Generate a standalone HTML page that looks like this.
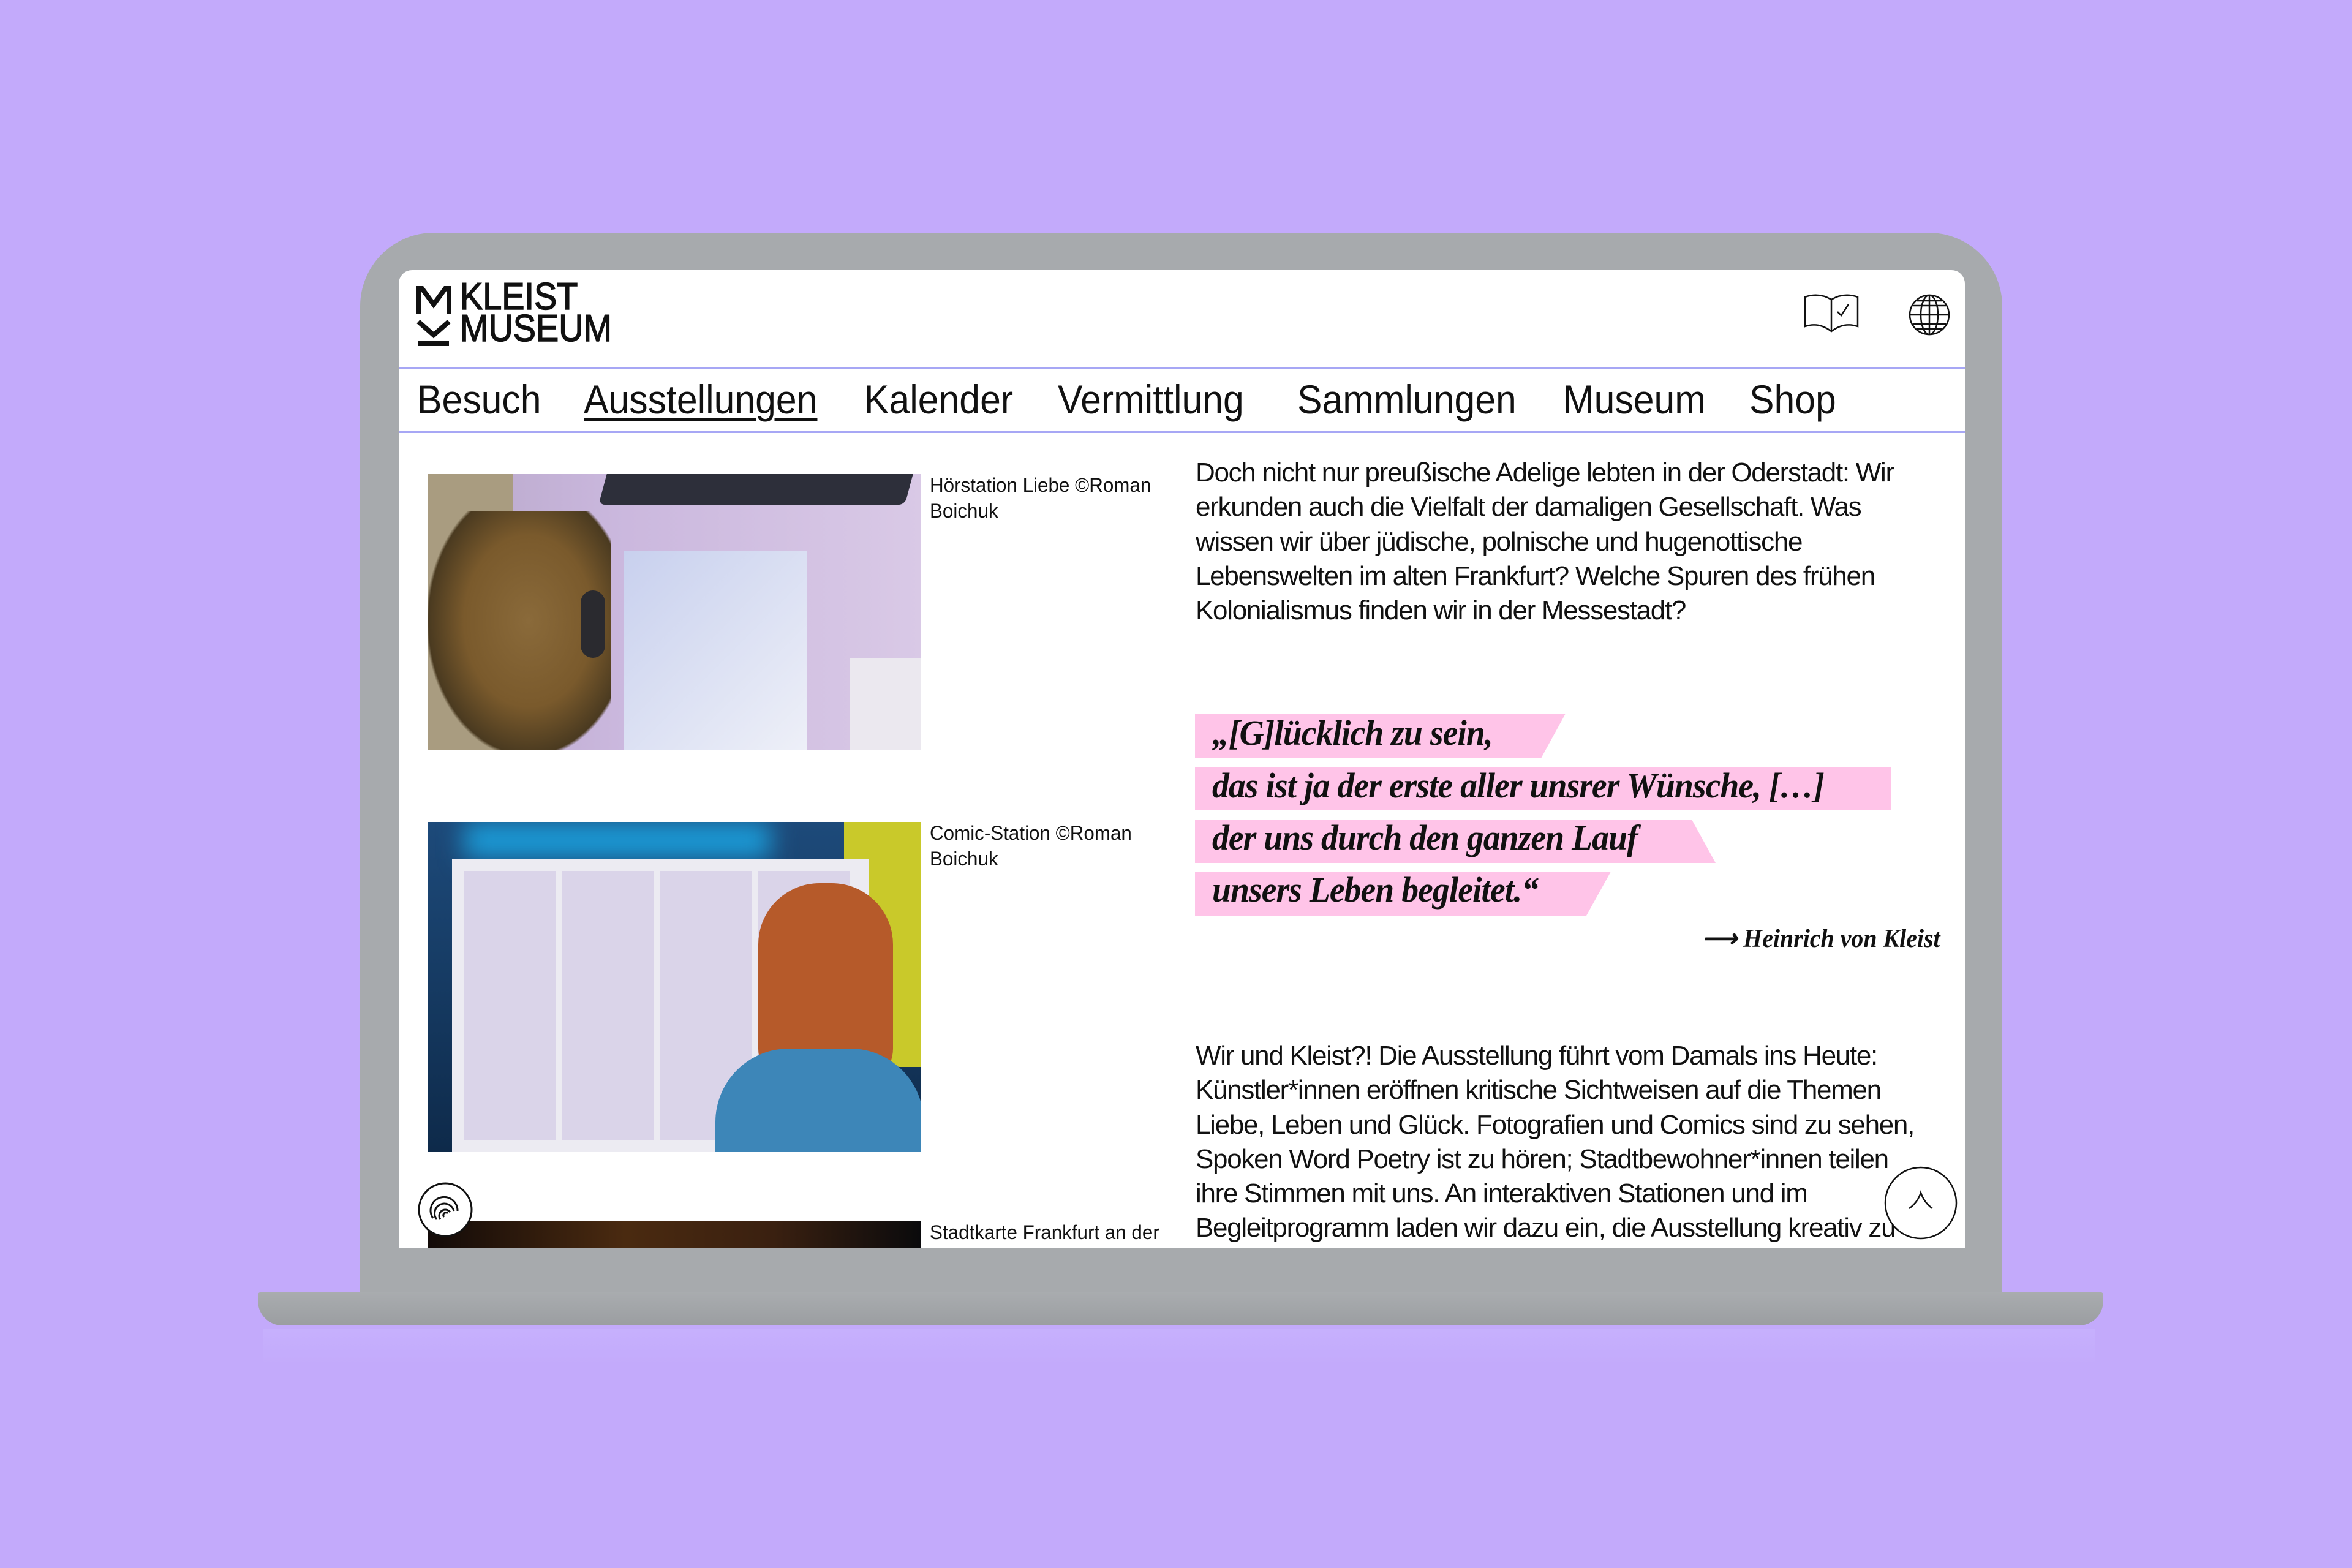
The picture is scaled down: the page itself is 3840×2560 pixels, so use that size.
<!DOCTYPE html>
<html><head><meta charset="utf-8"><style>
*{margin:0;padding:0;box-sizing:border-box}
body{width:3840px;height:2560px;background:#c3aafb;position:relative;overflow:hidden;font-family:"Liberation Sans",sans-serif;color:#111}
.abs{position:absolute}
.lid{left:588px;top:380px;width:2681px;height:1760px;background:#a7aaad;border-radius:120px 120px 0 0}
.base{left:421px;top:2110px;width:3013px;height:54px;background:linear-gradient(#a9acaf,#9b9ea1);border-radius:4px 4px 40px 40px}
.refl{left:430px;top:2170px;width:2990px;height:60px;background:linear-gradient(rgba(200,180,255,.6),rgba(195,170,251,0));}
.screen{left:651px;top:441px;width:2557px;height:1596px;background:#fff;border-radius:22px 22px 0 0;overflow:hidden}
.t{position:absolute;white-space:nowrap;transform-origin:left top}
.nav{font-size:66px;top:173px;transform:scaleX(.92)}
.q{position:absolute;font-family:"Liberation Serif",serif;font-style:italic;font-weight:bold;font-size:58px;white-space:nowrap;left:1328px;transform:scaleX(.96);transform-origin:left top;letter-spacing:-1px}
.p{position:absolute;left:1301px;font-size:44px;line-height:56.3px;white-space:nowrap;transform:scaleX(1);transform-origin:left top;letter-spacing:-1.3px}
.cap{position:absolute;left:867px;font-size:32px;line-height:42px;white-space:nowrap;transform:scaleX(.98);transform-origin:left top}
</style></head><body>
<div class="abs refl"></div>
<div class="abs lid"></div>
<div class="abs base"></div>
<div class="abs screen">
  <svg class="abs" style="left:28px;top:26px" width="58" height="100" viewBox="0 0 58 100">
    <path d="M4 46V4h6l19 26L48 4h6v42" fill="none" stroke="#111" stroke-width="8" stroke-linejoin="miter"/>
    <path d="M4 58L29 80L54 58M4 94h50" fill="none" stroke="#111" stroke-width="8"/>
  </svg>
  <div class="t" style="left:100px;top:18px;font-size:62px;line-height:52px;transform:scaleX(.9);-webkit-text-stroke:1.5px #111">KLEIST<br>MUSEUM</div>
  <svg class="abs" style="left:2293px;top:38px" width="92" height="66" viewBox="0 0 92 66" fill="none" stroke="#111" stroke-width="2.5">
    <path d="M3 6Q25 -2 46 10Q67 -2 89 6V54Q67 46 46 62Q25 46 3 54Z"/><path d="M46 10V62"/><path d="M56 30l6 6 12-18"/>
  </svg>
  <svg class="abs" style="left:2464px;top:38px" width="70" height="70" viewBox="0 0 70 70" fill="none" stroke="#111" stroke-width="2.5">
    <ellipse cx="35" cy="35" rx="32" ry="32"/><ellipse cx="35" cy="35" rx="14" ry="32"/><path d="M35 3v64M3 35h64M8 20h54M8 50h54M14 12h42M14 58h42"/>
  </svg>
  <div class="abs" style="left:0;top:158px;width:2557px;height:3px;background:#a7a7f5"></div>
  <div class="t nav" style="left:30px">Besuch</div>
  <div class="t nav" style="left:302px;text-decoration:underline;text-decoration-thickness:4px;text-underline-offset:8px">Ausstellungen</div>
  <div class="t nav" style="left:760px">Kalender</div>
  <div class="t nav" style="left:1076px">Vermittlung</div>
  <div class="t nav" style="left:1467px">Sammlungen</div>
  <div class="t nav" style="left:1901px">Museum</div>
  <div class="t nav" style="left:2205px">Shop</div>
  <div class="abs" style="left:0;top:263px;width:2557px;height:3px;background:#a7a7f5"></div>

  <div class="abs" style="left:47px;top:333px;width:806px;height:451px;overflow:hidden;background:linear-gradient(90deg,#b7a7c9 0%,#cbb8de 40%,#d9c9e6 100%)">
    <div class="abs" style="left:0;top:0;width:140px;height:451px;background:#a99c80"></div>
    <div class="abs" style="left:290px;top:-30px;width:500px;height:80px;background:#2d2f3a;border-radius:10px;transform:skewX(-15deg)"></div>
    <div class="abs" style="left:320px;top:125px;width:300px;height:330px;background:linear-gradient(135deg,#c8d0ee,#eef0f8)"></div>
    <div class="abs" style="left:690px;top:300px;width:120px;height:160px;background:#ebe8ef"></div>
    <div class="abs" style="left:0;top:60px;width:300px;height:400px;background:radial-gradient(ellipse at 55% 45%,#8a6a3a 0%,#7a5a2c 45%,#4a3a20 70%,rgba(0,0,0,0) 72%)"></div>
    <div class="abs" style="left:250px;top:190px;width:40px;height:110px;background:#2a2a2f;border-radius:20px"></div>
  </div>
  <div class="cap" style="top:330px">Hörstation Liebe ©Roman<br>Boichuk</div>

  <div class="abs" style="left:47px;top:901px;width:806px;height:539px;overflow:hidden;background:linear-gradient(180deg,#1d4a7a,#0e2a4a)">
    <div class="abs" style="left:60px;top:0;width:500px;height:60px;background:#1b9ad6;filter:blur(20px)"></div>
    <div class="abs" style="left:680px;top:0;width:130px;height:400px;background:#c9c92a"></div>
    <div class="abs" style="left:40px;top:60px;width:680px;height:479px;background:#ecebf2"></div>
    <div class="abs" style="left:60px;top:80px;width:640px;height:440px;background:repeating-linear-gradient(90deg,#d6cfe8 0 150px,#ecebf2 150px 160px),#ddd6ea;opacity:.8"></div>
    <div class="abs" style="left:540px;top:100px;width:220px;height:330px;background:#b65a2a;border-radius:100px 100px 60px 60px"></div>
    <div class="abs" style="left:470px;top:370px;width:340px;height:200px;background:#3d86b8;border-radius:120px 120px 0 0"></div>
  </div>
  <div class="cap" style="top:898px">Comic-Station ©Roman<br>Boichuk</div>

  <div class="abs" style="left:47px;top:1553px;width:806px;height:60px;background:linear-gradient(90deg,#120a08,#4a2a10 40%,#3a2010 70%,#0a0a0c)"></div>
  <div class="cap" style="top:1550px">Stadtkarte Frankfurt an der</div>

  <svg class="abs" style="left:30px;top:1488px" width="92" height="92" viewBox="0 0 92 92" fill="#fff" stroke="#111" stroke-width="3">
    <circle cx="46" cy="46" r="43"/>
    <path d="M26 60a22 22 0 1 1 40-12M32 62a16 16 0 1 1 28-14M38 62a10 10 0 1 1 16-12M44 58a4 4 0 1 1 6-6" fill="none"/>
  </svg>

  <div class="p" style="top:303px">Doch nicht nur preußische Adelige lebten in der Oderstadt: Wir<br>erkunden auch die Vielfalt der damaligen Gesellschaft. Was<br>wissen wir über jüdische, polnische und hugenottische<br>Lebenswelten im alten Frankfurt? Welche Spuren des frühen<br>Kolonialismus finden wir in der Messestadt?</div>

  <svg class="abs" style="left:0;top:0" width="2557" height="1200">
    <polygon points="1300,724 1905,724 1865,797 1300,797" fill="#ffc4e8"/>
    <polygon points="1300,811 2436,811 2436,882 1300,882" fill="#ffc4e8"/>
    <polygon points="1300,897 2111,897 2150,968 1300,968" fill="#ffc4e8"/>
    <polygon points="1300,982 1979,982 1939,1054 1300,1054" fill="#ffc4e8"/>
  </svg>
  <div class="q" style="top:722px">„[G]lücklich zu sein,</div>
  <div class="q" style="top:808px">das ist ja der erste aller unsrer Wünsche, […]</div>
  <div class="q" style="top:893px">der uns durch den ganzen Lauf</div>
  <div class="q" style="top:978px">unsers Leben begleitet.“</div>
  <div class="t" style="left:2128px;top:1066px;font-family:'Liberation Serif',serif;font-style:italic;font-weight:bold;font-size:42px;transform:scaleX(.95)">⟶ Heinrich von Kleist</div>

  <div class="p" style="top:1255px">Wir und Kleist?! Die Ausstellung führt vom Damals ins Heute:<br>Künstler*innen eröffnen kritische Sichtweisen auf die Themen<br>Liebe, Leben und Glück. Fotografien und Comics sind zu sehen,<br>Spoken Word Poetry ist zu hören; Stadtbewohner*innen teilen<br>ihre Stimmen mit uns. An interaktiven Stationen und im<br>Begleitprogramm laden wir dazu ein, die Ausstellung kreativ zu</div>

  <svg class="abs" style="left:2424px;top:1462px" width="122" height="122" viewBox="0 0 122 122">
    <circle cx="61" cy="61" r="58" fill="#fff" stroke="#111" stroke-width="2.5"/>
    <path d="M42 70Q56 60 61 44Q66 60 80 70" fill="none" stroke="#111" stroke-width="2.5"/>
  </svg>
</div>
</body></html>
